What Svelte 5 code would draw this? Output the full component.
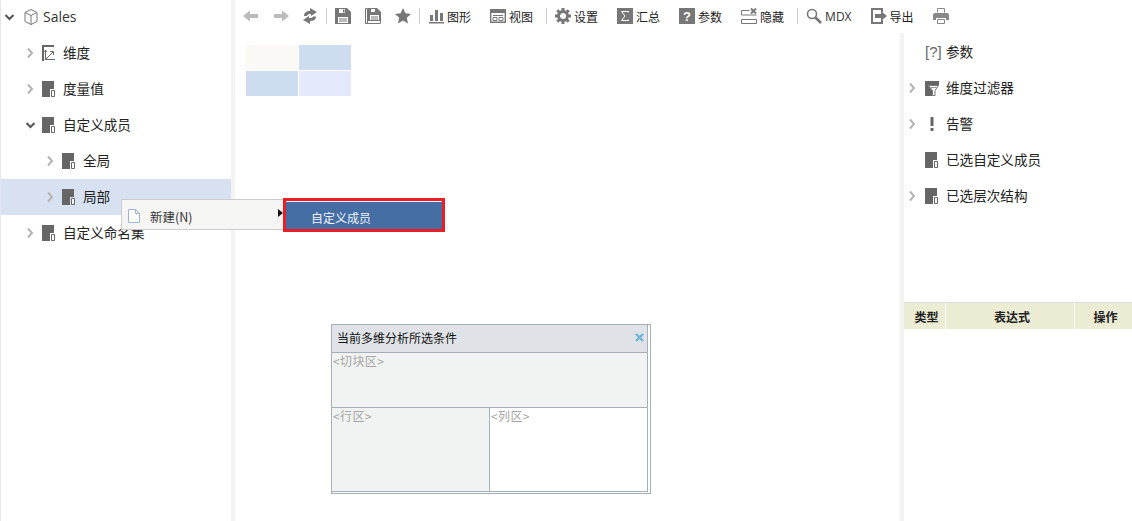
<script>
  const tree = [
    { label: '维度', depth: 1, icon: 'dim', arrow: 'right' },
    { label: '度量值', depth: 1, icon: 'doc', arrow: 'right' },
    { label: '自定义成员', depth: 1, icon: 'doc', arrow: 'down' },
    { label: '全局', depth: 2, icon: 'doc', arrow: 'right' },
    { label: '局部', depth: 2, icon: 'doc', arrow: 'right', selected: true },
    { label: '自定义命名集', depth: 1, icon: 'doc', arrow: 'right' }
  ];
  const side = [
    { label: '参数', icon: 'param' },
    { label: '维度过滤器', icon: 'filter', arrow: true },
    { label: '告警', icon: 'alert', arrow: true },
    { label: '已选自定义成员', icon: 'doc' },
    { label: '已选层次结构', icon: 'doc', arrow: true }
  ];
</script>

{#snippet chevron(dir)}
  <svg class="chevron" width="10" height="12" viewBox="0 0 10 12">
    {#if dir === 'down'}
      <path d="M.500 4l4 4 4-4" fill="none" stroke="#555" stroke-width="2"/>
    {:else}
      <path d="M2 1.500l4 4.500-4 4.500" fill="none" stroke="#b4b4b4" stroke-width="2"/>
    {/if}
  </svg>
{/snippet}

{#snippet docIcon()}
  <svg width="13" height="16" viewBox="0 0 13 16">
    <path d="M0 0h12v8H8v8H0z" fill="#666"/>
    <path d="M9.500 9.500h3v6h-3z" fill="#fff" stroke="#666"/>
  </svg>
{/snippet}

{#snippet treeIcon(name)}
  {#if name === 'dim'}
    <svg width="13" height="16" viewBox="0 0 13 16">
      <path d="M0 0h12v2H2v14H0z" fill="#666"/>
      <path d="M3.500 5v9.500H13M3.500 14.500L11 7M8 6.500h3.500V10M3.500 5L2.500 7M3.500 5l1 2" fill="none" stroke="#666"/>
    </svg>
  {:else}
    {@render docIcon()}
  {/if}
{/snippet}

<div class="app">
  <aside class="tree">
    <div class="row root">
      {@render chevron('down')}
      <svg class="cube" width="14" height="16" viewBox="0 0 14 16">
        <path d="M7 .500l6 3v9l-6 3-6-3v-9zM1 3.500l6 3 6-3M7 6.500v9" fill="none" stroke="#777"/>
      </svg>
      <span class="sales">Sales</span>
    </div>
    {#each tree as item}
      <div class="row depth{item.depth}" class:selected={item.selected}>
        {@render chevron(item.arrow)}
        {@render treeIcon(item.icon)}
        <span class="label">{item.label}</span>
      </div>
    {/each}
  </aside>

  <div class="splitter"></div>

  <div class="work">
    <div class="toolbar">
      <svg class="ic" width="16" height="16" viewBox="0 0 16 16"><path d="M0 8l7-5.500V6h8v4H7v3.500z" fill="#bbb"/></svg>
      <svg class="ic gap" width="16" height="16" viewBox="0 0 16 16"><path d="M16 8L9 2.500V6H1v4h8v3.500z" fill="#bbb"/></svg>
      <svg class="ic gap" width="14" height="16" viewBox="0 0 14 16"><path d="M1 8c0-3 2-5 6-5V0l7 4-6 4V6C6 6 4 6.500 4 8zM13 8.500c0 3-2 4.500-6 4.500v3L0 12l6-4v2c2 0 4-.5 4-1.500z" fill="#777"/></svg>
      <span class="sep first"></span>
      <svg class="ic" width="16" height="16" viewBox="0 0 16 16"><path d="M0 0h12l4 4v12H0z" fill="#777"/><path d="M4 1h6v4H4zM3 9h10v6H3z" fill="#fff"/><path d="M4 11h8M4 13h8" stroke="#777"/><path d="M8 1.500h1.500v3H8z" fill="#777"/></svg>
      <svg class="ic gap" width="16" height="16" viewBox="0 0 16 16"><path d="M.500.500h2v15h-2zM.500 15.500h15V5" fill="none" stroke="#777"/><path d="M3 0h9l4 4v9H3z" fill="#777"/><path d="M6 1h4v3H6zM5 7h9v5H5z" fill="#fff"/><path d="M6 9h7M6 11h7" stroke="#777"/></svg>
      <svg class="ic gap" width="16" height="16" viewBox="0 0 16 16"><path d="M8 0l2.400 5.300 5.600.6-4.200 3.800 1.200 5.800L8 12.600l-5 2.900 1.200-5.800L0 5.900l5.600-.6z" fill="#777"/></svg>
      <span class="sep short"></span>
      <div class="tool">
        <svg width="15" height="16" viewBox="0 0 15 16"><path d="M1 7h3v6H1zM6 2h3v11H6zM11 5h3v8h-3zM0 14h15v1.500H0z" fill="#777"/></svg>
        <span>图形</span>
      </div>
      <div class="tool">
        <svg width="16" height="16" viewBox="0 0 16 16"><path d="M.700 1.700h14.600v12.600H.700z" fill="none" stroke="#777" stroke-width="1.400"/><path d="M0 1h16v4H0z" fill="#777"/><path d="M3 7.500h10M3 9.500v3h4v-3zM9 9.500h4v3H9z" fill="none" stroke="#777"/></svg>
        <span>视图</span>
      </div>
      <span class="sep"></span>
      <div class="tool">
        <svg width="16" height="16" viewBox="0 0 16 16"><circle cx="8" cy="8" r="4.500" fill="none" stroke="#777" stroke-width="3"/><path d="M8 0v3M8 13v3M0 8h3M13 8h3M2.300 2.300l2.200 2.200M11.500 11.500l2.200 2.200M13.700 2.300l-2.200 2.200M4.500 11.500l-2.200 2.200" stroke="#777" stroke-width="3"/></svg>
        <span>设置</span>
      </div>
      <div class="tool">
        <svg width="16" height="16" viewBox="0 0 16 16"><path d="M0 0h16v16H0z" fill="#777"/><path d="M11.500 4.500V3.500h-7L8 8l-3.500 4.500h7v-1" fill="none" stroke="#fff"/></svg>
        <span>汇总</span>
      </div>
      <div class="tool">
        <svg width="16" height="16" viewBox="0 0 16 16"><path d="M0 0h16v16H0z" fill="#777"/><text x="8" y="13" text-anchor="middle" class="qmark">?</text></svg>
        <span>参数</span>
      </div>
      <div class="tool">
        <svg width="16" height="16" viewBox="0 0 16 16"><path d="M.500 2.500h8M.500 7h15M.500 11.500h15v4H.500z" fill="none" stroke="#777"/><path d="M.500 2.500V7" stroke="#777"/><path d="M10 .500l5 5M15 .500l-5 5" stroke="#777" stroke-width="2"/></svg>
        <span>隐藏</span>
      </div>
      <span class="sep"></span>
      <div class="tool">
        <svg width="16" height="16" viewBox="0 0 16 16"><circle cx="6" cy="6" r="4.500" fill="none" stroke="#777" stroke-width="1.600"/><path d="M9.500 9.500L15 15" stroke="#777" stroke-width="2.600"/></svg>
        <span class="mdx">MDX</span>
      </div>
      <div class="tool">
        <svg width="16" height="16" viewBox="0 0 16 16"><path d="M11 4V1H1v14h10v-3" fill="none" stroke="#777" stroke-width="2"/><path d="M4 6h6V3l6 5-6 5v-3H4z" fill="#777"/></svg>
        <span>导出</span>
      </div>
      <svg class="ic" width="16" height="16" viewBox="0 0 16 16"><path d="M4.500 4.500v-4h7v4" fill="none" stroke="#888"/><path d="M2 5h12a2 2 0 0 1 2 2v5h-3v-2H3v2H0V7a2 2 0 0 1 2-2z" fill="#888"/><path d="M4.500 11.500h7v4h-7z" fill="#fff" stroke="#888"/></svg>
    </div>

    <div class="panes">
      <main class="main">
        <div class="tiles">
          <div class="cream"></div>
          <div class="blue"></div>
          <div class="blue"></div>
          <div class="pale"></div>
        </div>
      </main>

      <div class="splitter"></div>

      <aside class="side">
        <div class="side-list">
          {#each side as item}
            <div class="side-row">
              <span class="side-arrow">{#if item.arrow}{@render chevron('right')}{/if}</span>
              <span class="side-icon">
                {#if item.icon === 'param'}
                  <span class="param-glyph">[?]</span>
                {:else if item.icon === 'filter'}
                  <svg width="14" height="15" viewBox="0 0 14 15"><path d="M0 0h14v4H3l4 5v6H0z" fill="#666"/><path d="M3.500 4.500h10L10 9.500v5H7.500v-5z" fill="#fff" stroke="#777"/><path d="M5.500 6.500h6" stroke="#999"/></svg>
                {:else if item.icon === 'alert'}
                  <svg width="14" height="16" viewBox="0 0 14 16"><path d="M5.500 1h3v9h-3zM5.500 12h3v3h-3z" fill="#666"/></svg>
                {:else}
                  {@render docIcon()}
                {/if}
              </span>
              <span class="label">{item.label}</span>
            </div>
          {/each}
        </div>
        <div class="table-head">
          <div class="th type">类型</div>
          <div class="th expr">表达式</div>
          <div class="th op">操作</div>
        </div>
      </aside>
    </div>
  </div>

  <div class="menu">
    <svg width="12" height="14" viewBox="0 0 12 14"><path d="M.500.500h7l4 4v9H.500z" fill="#fff" stroke="#9db4dc"/><path d="M7.500.500v4h4" fill="none" stroke="#9db4dc"/></svg>
    <span class="menu-text">新建(N)</span>
    <span class="menu-caret"></span>
  </div>
  <div class="submenu"><div class="submenu-item">自定义成员</div></div>

  <div class="dialog">
    <div class="dialog-inner">
      <div class="dialog-title">
        <span>当前多维分析所选条件</span>
        <svg width="9" height="9" viewBox="0 0 9 9"><path d="M1 1l7 7M8 1L1 8" stroke="#6db6d3" stroke-width="2.400"/></svg>
      </div>
      <div class="slice">&lt;切块区&gt;</div>
      <div class="axes">
        <div class="axis rows">&lt;行区&gt;</div>
        <div class="axis cols">&lt;列区&gt;</div>
      </div>
    </div>
  </div>
</div>

<style>
  :global(body) {
    margin: 0;
    background: #fff;
  }
  .app {
    position: relative;
    display: flex;
    width: 1132px;
    height: 521px;
    overflow: hidden;
    font-family: "Noto Sans CJK SC", "Noto Sans", sans-serif;
    color: #222;
  }
  .tree {
    width: 230px;
    flex: none;
    border-left: 1px solid #e4e4f4;
  }
  .splitter {
    width: 4px;
    flex: none;
    background: #f3f3f3;
  }
  .work {
    flex: 1;
    min-width: 0;
    display: flex;
    flex-direction: column;
  }
  .panes {
    flex: 1;
    display: flex;
    min-height: 0;
  }
  .row {
    display: flex;
    align-items: center;
    height: 36px;
    font-size: 13.600px;
  }
  .row:first-child {
    margin-top: -1px;
  }
  .row svg {
    flex: none;
  }
  .label {
    padding-bottom: 2px;
  }
  .root {
    padding-left: 4px;
  }
  .root .cube {
    margin-left: 9px;
  }
  .sales {
    margin-left: 5px;
    padding-bottom: 1px;
    font-family: "Open Sans", sans-serif;
    font-size: 14px;
    color: #333;
  }
  .depth1 {
    padding-left: 25px;
  }
  .depth2 {
    padding-left: 45px;
  }
  .depth1 .label,
  .depth2 .label {
    margin-left: 8px;
  }
  .depth1 > svg:nth-child(2),
  .depth2 > svg:nth-child(2) {
    margin-left: 6px;
  }
  .selected {
    background: #d7e1f2;
  }
  .main {
    flex: 1;
    min-width: 0;
  }
  .toolbar {
    display: flex;
    align-items: center;
    height: 32px;
    margin-bottom: 1px;
    padding-left: 8px;
    font-size: 12px;
    flex: none;
  }
  .ic {
    flex: none;
  }
  .gap {
    margin-left: 14px;
  }
  .sep {
    width: 1px;
    height: 16px;
    margin: 0 8px 0 13px;
    background: #ccc;
    flex: none;
  }
  .sep.first {
    margin: 0 8px 0 9px;
  }
  .sep.short {
    margin: 0 9px 0 8px;
  }
  .tool {
    display: flex;
    align-items: center;
    gap: 3px;
    margin-right: 19px;
    white-space: nowrap;
    flex: none;
  }
  .tool:has(+ .sep) {
    margin-right: 0;
  }
  .tool svg {
    flex: none;
  }
  .qmark {
    font: bold 13px "Liberation Sans", sans-serif;
    fill: #fff;
  }
  .mdx {
    font-family: "Open Sans", sans-serif;
    color: #333;
  }
  .tiles {
    display: grid;
    grid-template-columns: 52px 52px;
    grid-auto-rows: 25px;
    gap: 1px;
    margin: 12px 0 0 11px;
  }
  .cream {
    background: #fbf9f6;
  }
  .blue {
    background: #cddcef;
  }
  .pale {
    background: #e4e9fb;
  }
  .side {
    width: 228px;
    flex: none;
  }
  .side-list {
    height: 269px;
    padding-top: 1px;
    box-sizing: border-box;
  }
  .side-row {
    display: flex;
    align-items: center;
    height: 36px;
    font-size: 13.600px;
  }
  .side-arrow {
    width: 21px;
    padding-left: 4px;
    box-sizing: border-box;
    display: flex;
    flex: none;
  }
  .side-icon {
    width: 21px;
    display: flex;
    flex: none;
  }
  .param-glyph {
    font-family: "Liberation Sans", sans-serif;
    font-size: 15px;
    line-height: 16px;
    color: #666;
  }
  .table-head {
    display: flex;
    height: 27px;
    border-top: 1px solid #dcdcdc;
    font-size: 12px;
    font-weight: 700;
  }
  .th {
    display: flex;
    align-items: center;
    justify-content: center;
    background: #ecebd3;
    height: 26px;
    box-sizing: border-box;
  }
  .type {
    width: 41px;
    margin-right: 1px;
    padding-left: 4px;
  }
  .expr {
    width: 128px;
    margin-right: 1px;
    padding-left: 4px;
  }
  .op {
    flex: 1;
    padding-left: 4px;
  }
  .menu {
    position: absolute;
    left: 121px;
    top: 199px;
    width: 163px;
    height: 31px;
    box-sizing: border-box;
    display: flex;
    align-items: center;
    padding: 3px 0 0 6px;
    background: #f5f5f3;
    border: 1px solid #ccc;
    font-size: 12.500px;
    color: #333;
  }
  .menu-text {
    margin-left: 10px;
  }
  .menu-caret {
    position: absolute;
    right: 0;
    top: 9px;
    border-left: 5px solid #111;
    border-top: 4px solid transparent;
    border-bottom: 4px solid transparent;
  }
  .submenu {
    position: absolute;
    left: 283px;
    top: 198px;
    width: 162px;
    height: 34px;
    box-sizing: border-box;
    border: 3px solid #ee1c25;
    background: #fff;
    padding-top: 1px;
  }
  .submenu-item {
    height: 100%;
    padding-left: 25px;
    background: #446ea4;
    color: #f2f4f8;
    font-size: 12px;
    line-height: 31px;
    overflow: hidden;
    box-sizing: border-box;
  }
  .dialog {
    position: absolute;
    left: 331px;
    top: 324px;
    width: 320px;
    height: 170px;
    box-sizing: border-box;
    border: 1px solid #a3afb9;
    background: #fff;
    font-size: 12px;
  }
  .dialog-inner {
    width: 315px;
    height: 166px;
    border-right: 1px solid #a3afb9;
    border-bottom: 1px solid #a3afb9;
    display: flex;
    flex-direction: column;
  }
  .dialog-title {
    display: flex;
    align-items: center;
    justify-content: space-between;
    flex: none;
    padding: 0 3px 2px 5px;
    box-sizing: border-box;
    height: 28px;
    background: #dfe2e7;
    border-bottom: 1px solid #a3afb9;
    color: #111;
  }
  .slice {
    height: 54px;
    flex: none;
    background: #f1f3f2;
    border-bottom: 1px solid #a3afb9;
    padding-left: 1px;
    color: #a5a5a5;
    line-height: 15px;
    letter-spacing: .4px;
  }
  .axes {
    display: flex;
    flex: 1;
  }
  .axis {
    padding-left: 1px;
    color: #a5a5a5;
    line-height: 15px;
    letter-spacing: .4px;
  }
  .rows {
    width: 156px;
    background: #f1f3f2;
    border-right: 1px solid #a3afb9;
  }
  .cols {
    flex: 1;
    background: #fff;
  }
</style>
